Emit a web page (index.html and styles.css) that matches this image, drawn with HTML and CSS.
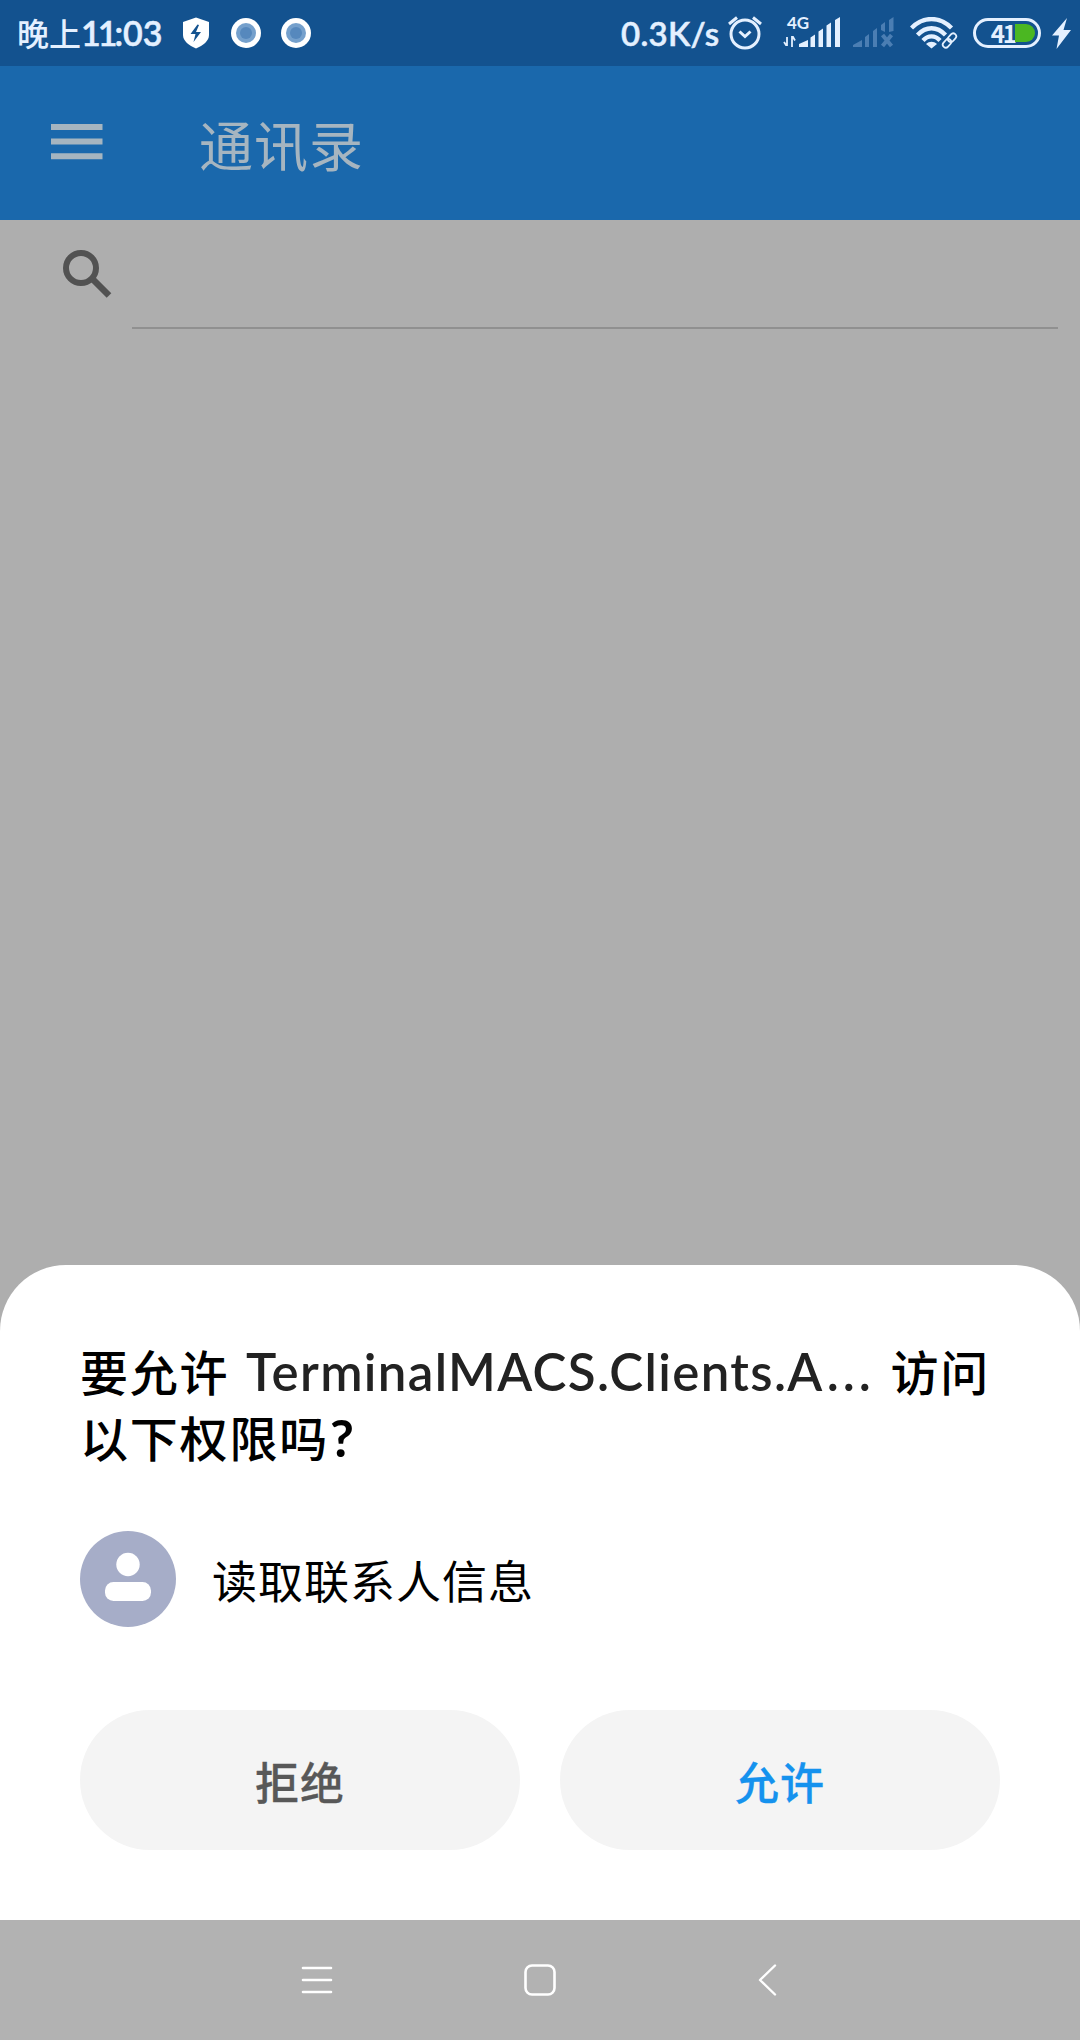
FILE: index.html
```html
<!DOCTYPE html>
<html lang="zh-CN">
<head>
<meta charset="utf-8">
<title>通讯录</title>
<link rel="stylesheet" href="styles.css">
</head>
<body>
<div class="screen">
  <header class="status">
    <span class="clock">晚上<span class="digits"><span class="ones">11</span>:03</span></span>
    <svg class="shield" width="28" height="32" viewBox="0 0 28 32"><path d="M14 .5 27 5v13c0 6-6 10.500-13 13.500C7 28.500 1 24 1 18V5z" fill="#fff"/><path d="M15.500 7.500 8.500 17h5l-2 8 7.500-10h-5l3-7z" fill="#13528f"/></svg>
    <svg class="dot" width="30" height="30" viewBox="0 0 30 30"><circle cx="15" cy="15" r="15" fill="#fff"/><circle cx="15" cy="15" r="10" fill="#75a0cc"/><circle cx="15" cy="15" r="6" fill="#5688bd"/></svg>
    <svg class="dot" width="30" height="30" viewBox="0 0 30 30"><circle cx="15" cy="15" r="15" fill="#fff"/><circle cx="15" cy="15" r="10" fill="#75a0cc"/><circle cx="15" cy="15" r="6" fill="#5688bd"/></svg>
    <span class="speed">0.3K/s</span>
    <svg class="alarm" width="36" height="36" viewBox="0 0 36 36" fill="none" stroke="#e4f0ff" stroke-width="3"><circle cx="18" cy="20" r="14"/><path d="m12.500 17.500 5.500 5 5.500-5M2 10l8-6.500M34 10l-8-6.500"/></svg>
    <div class="mobile">
      <span class="net">4G</span>
      <svg width="57" height="32" viewBox="0 0 57 32" fill="#e4f0ff"><path d="M4 20v8H3l-2-3M9 30V20h1l2 3.500" fill="none" stroke="#e4f0ff" stroke-width="1.800"/><path d="M16 30v-3l9-4v7zM27.500 20.500l4.500-3V30h-4.500zM35.500 14.500l4.500-3V30h-4.500zM43.500 8.500l4.500-3V30h-4.500zM52 3l5-3v30h-5z"/></svg>
    </div>
    <svg class="nosim" width="41" height="32" viewBox="0 0 41 32" fill="#4b7eb3"><path d="M0 30v-2l9-5v7zM12 20l4-3v13h-4zM20 14l4-3v19h-4zM28 8l4-3v10l-4-2zM36 3l4.500-3v14l-4.500 1z"/><path d="m29.500 18 9 11M38.500 18l-9 11" stroke="#4b7eb3" stroke-width="4"/></svg>
    <svg class="wifi" width="48" height="32" viewBox="0 0 48 32" fill="none" stroke="#e4f0ff"><path d="M1.500 11C13-1 30-1 41.500 11M7.500 18C16 9 27 9 35.500 18M13 23.500c5-5.500 12-5.500 17 0" stroke-width="4.300"/><path d="m16 27 5.500 4.500L27 27c-3.500-3-7.500-3-11 0z" fill="#e4f0ff" stroke="none"/><g transform="translate(39.500 23.500) rotate(-48)" stroke="#13528f" stroke-width="4"><rect x="-8.500" y="-3" width="9.500" height="6" rx="3"/><rect x="-1" y="-3" width="9.500" height="6" rx="3"/><g stroke="#e4f0ff" stroke-width="1.800"><rect x="-8.500" y="-3" width="9.500" height="6" rx="3"/><rect x="-1" y="-3" width="9.500" height="6" rx="3"/></g></g></svg>
    <div class="battery"><span class="level">41</span><span class="charge"></span></div>
    <svg class="bolt" width="19" height="31" viewBox="0 0 19 31"><path d="M15 0 0 17.500h7L4.500 31 19 12h-7.500z" fill="#e4f0ff"/></svg>
  </header>

  <nav class="appbar">
    <svg class="menu" width="52" height="36" viewBox="0 0 52 36" fill="#a6b5c0"><path d="M0 0h51.500v6H0zM0 14.500h51.500v6H0zM0 29.200h51.500v6H0z"/></svg>
    <h1 class="page-title">通讯录</h1>
  </nav>

  <main class="contacts">
    <div class="search">
      <svg width="49" height="49" viewBox="0 0 49 49" fill="none" stroke="#525252" stroke-width="6"><circle cx="18" cy="18" r="15"/><path d="m29 28.500 17 17" stroke-width="6.500"/></svg>
      <div class="search-field"></div>
    </div>
  </main>

  <section class="sheet">
    <h2 class="question">要允许 <span class="app">TerminalMACS.Clients.A<span class="dots">...</span></span> 访问<br>以下权限吗<span class="mark">?</span></h2>
    <div class="permission">
      <svg width="96" height="96" viewBox="0 0 96 96"><circle cx="48" cy="48" r="48" fill="#a6adc8"/><circle cx="48" cy="33.500" r="11.700" fill="#fff"/><rect x="25" y="51" width="46" height="19" rx="8.500" fill="#fff"/></svg>
      <span>读取联系人信息</span>
    </div>
    <div class="actions">
      <button class="btn">拒绝</button>
      <button class="btn btn-allow">允许</button>
    </div>
  </section>

  <footer class="navbar">
    <svg width="32" height="32" viewBox="0 0 32 32" fill="none" stroke="#fff" stroke-width="2.600" stroke-linecap="round"><path d="M2 4h28M2 16h28M2 28h28"/></svg>
    <svg width="32" height="32" viewBox="0 0 32 32" fill="none" stroke="#fff" stroke-width="2.600"><rect x="1.500" y="1.500" width="29" height="29" rx="6.500"/></svg>
    <svg width="32" height="32" viewBox="0 0 32 32" fill="none" stroke="#fff" stroke-width="2.400" stroke-linecap="round" stroke-linejoin="round"><path d="M28 1.500 13 16l15 14.500"/></svg>
  </footer>
</div>
</body>
</html>
```
FILE: styles.css
```css
* { box-sizing: border-box; }

body {
  margin: 0;
  font-family: "Noto Sans CJK SC", sans-serif;
}

svg { display: block; flex: none; }

.screen {
  width: 1080px;
  height: 2040px;
  display: flex;
  flex-direction: column;
  background: #aeaeae;
  overflow: hidden;
}

.status {
  height: 66px;
  display: flex;
  align-items: center;
  background: #13528f;
  color: #e4f0ff;
  white-space: nowrap;
}

.clock {
  width: 163px;
  margin-top: -2px;
  padding-left: 17px;
  font-size: 32px;
  line-height: 66px;
  font-weight: 500;
}

.digits {
  font-family: Lato, sans-serif;
  font-size: 34px;
  font-weight: 600;
  letter-spacing: 0;
  line-height: 0;
  -webkit-text-stroke: 0.5px;
}

.ones { letter-spacing: -3px; }

.shield { margin-left: 19px; }
.dot { margin-left: 21px; }
.dot + .dot { margin-left: 20px; }

.speed {
  width: 106px;
  margin-left: auto;
  font-family: Lato, sans-serif;
  font-size: 33px;
  font-weight: 600;
  letter-spacing: 0.3px;
  -webkit-text-stroke: 0.5px;
}

.alarm { margin-top: -2px; }

.mobile {
  position: relative;
  margin-left: 20px;
}

.net {
  position: absolute;
  left: 4px;
  top: -4px;
  font: 700 17px/20px Lato, sans-serif;
}

.nosim { margin-left: 13px; }
.wifi { margin-left: 16px; }

.battery {
  width: 68px;
  height: 30px;
  margin-left: 15px;
  padding: 3px;
  display: flex;
  align-items: center;
  justify-content: flex-end;
  border: 3px solid #e4f0ff;
  border-radius: 15px;
}

.level {
  font: 700 24px/24px "Noto Sans CJK SC", sans-serif;
  letter-spacing: -2px;
}

.charge {
  width: 20px;
  height: 18px;
  background: #4bb722;
  border-radius: 0 9px 9px 0;
}

.bolt { margin: 0 9px 0 11px; }

.appbar {
  height: 154px;
  display: flex;
  align-items: center;
  padding-left: 51px;
  background: #1a68ac;
}

.menu { margin-top: -2px; }

.page-title {
  margin: 1px 0 0 96px;
  font-size: 54px;
  line-height: 80px;
  font-weight: 400;
  letter-spacing: 1px;
  color: #a6b5c0;
}

.contacts { height: 1045px; }

.search {
  display: flex;
  padding: 30px 22px 0 63px;
}

.search-field {
  flex: 1;
  height: 79px;
  margin-left: 20px;
  border-bottom: 2px solid #909090;
}

.sheet {
  height: 655px;
  padding: 72px 80px 0;
  background: #fff;
  border-radius: 66px 66px 0 0;
}

.question {
  margin: 0;
  font-size: 48px;
  line-height: 66px;
  font-weight: 500;
  letter-spacing: 1.8px;
  color: #000;
  white-space: nowrap;
}

.app {
  margin: 0 3px 0 4px;
  font-family: Lato, sans-serif;
  font-size: 51px;
  font-weight: 600;
  letter-spacing: 1.35px;
  line-height: 0;
  color: #222;
}

.dots {
  margin-left: 3px;
  letter-spacing: 4px;
}

.mark {
  margin-left: 1px;
  font-family: Lato, sans-serif;
  font-size: 52px;
  font-weight: 700;
  line-height: 0;
}

.permission {
  display: flex;
  align-items: center;
  margin-top: 62px;
  font-size: 45px;
  line-height: 66px;
  letter-spacing: 1px;
  color: #000;
}

.permission span { margin: 2px 0 0 36px; }

.actions {
  display: flex;
  gap: 40px;
  margin-top: 83px;
}

.btn {
  flex: 1;
  height: 140px;
  padding: 2px 0 0;
  border: 0;
  border-radius: 70px;
  background: #f4f4f4;
  color: #585858;
  font: 500 44px/66px "Noto Sans CJK SC", sans-serif;
  letter-spacing: 1px;
  -webkit-text-stroke: 0.3px;
}

.btn-allow { color: #1592ee; }

.navbar {
  height: 120px;
  display: flex;
  justify-content: center;
  align-items: center;
  gap: 191px;
  background: #b2b2b2;
}
```
